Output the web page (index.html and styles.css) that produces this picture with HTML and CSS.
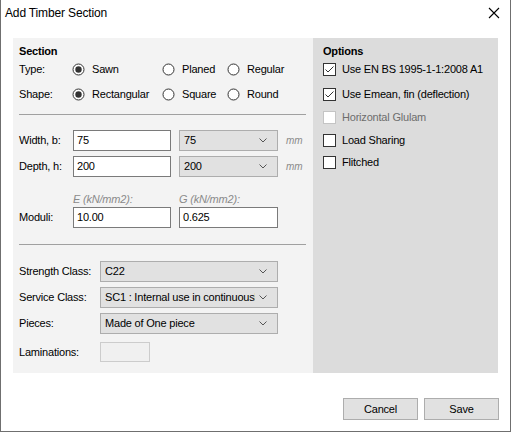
FILE: index.html
```html
<!DOCTYPE html>
<html>
<head>
<meta charset="utf-8">
<link rel="stylesheet" href="styles.css">
</head>
<body>
<div class="window">
  <div class="titlebar">
    <span class="title">Add Timber Section</span>
    <svg class="close" width="12" height="12" viewBox="0 0 12 12"><path d="M1 1 L11 11 M11 1 L1 11" stroke="#000" stroke-width="1.1" fill="none"/></svg>
  </div>
  <div class="content">
    <div class="panel-left">
      <div class="heading">Section</div>
      <div class="row radio-row first">
        <span class="lbl lbl-radio">Type:</span>
        <span class="radio c1"><svg width="13" height="13" viewBox="0 0 13 13"><circle cx="6.5" cy="6.5" r="5.5" fill="#fff" stroke="#333"/><circle cx="6.5" cy="6.5" r="3.2" fill="#333"/></svg>Sawn</span>
        <span class="radio c2"><svg width="13" height="13" viewBox="0 0 13 13"><circle cx="6.5" cy="6.5" r="5.5" fill="#fff" stroke="#333"/></svg>Planed</span>
        <span class="radio"><svg width="13" height="13" viewBox="0 0 13 13"><circle cx="6.5" cy="6.5" r="5.5" fill="#fff" stroke="#333"/></svg>Regular</span>
      </div>
      <div class="row radio-row second">
        <span class="lbl lbl-radio">Shape:</span>
        <span class="radio c1"><svg width="13" height="13" viewBox="0 0 13 13"><circle cx="6.5" cy="6.5" r="5.5" fill="#fff" stroke="#333"/><circle cx="6.5" cy="6.5" r="3.2" fill="#333"/></svg>Rectangular</span>
        <span class="radio c2"><svg width="13" height="13" viewBox="0 0 13 13"><circle cx="6.5" cy="6.5" r="5.5" fill="#fff" stroke="#333"/></svg>Square</span>
        <span class="radio"><svg width="13" height="13" viewBox="0 0 13 13"><circle cx="6.5" cy="6.5" r="5.5" fill="#fff" stroke="#333"/></svg>Round</span>
      </div>
      <div class="sep sep1"></div>
      <div class="row dim-row width-row">
        <span class="lbl lbl-dim">Width, b:</span>
        <span class="input w98">75</span>
        <span class="select w99"><span class="sel-text">75</span><svg class="chev" width="8" height="5" viewBox="0 0 8 5"><path d="M0.5 0.5 L4 4 L7.5 0.5" stroke="#555" fill="none"/></svg></span>
        <span class="unit">mm</span>
      </div>
      <div class="row dim-row depth-row">
        <span class="lbl lbl-dim">Depth, h:</span>
        <span class="input w98">200</span>
        <span class="select w99"><span class="sel-text">200</span><svg class="chev" width="8" height="5" viewBox="0 0 8 5"><path d="M0.5 0.5 L4 4 L7.5 0.5" stroke="#555" fill="none"/></svg></span>
        <span class="unit">mm</span>
      </div>
      <div class="row mod-labels">
        <span class="lbl lbl-dim"></span>
        <span class="hint w98">E (kN/mm2):</span>
        <span class="hint">G (kN/mm2):</span>
      </div>
      <div class="row dim-row moduli-row">
        <span class="lbl lbl-dim">Moduli:</span>
        <span class="input w98">10.00</span>
        <span class="input w99">0.625</span>
      </div>
      <div class="sep sep2"></div>
      <div class="row cls-row strength-row">
        <span class="lbl lbl-cls">Strength Class:</span>
        <span class="select w178"><span class="sel-text">C22</span><svg class="chev" width="8" height="5" viewBox="0 0 8 5"><path d="M0.5 0.5 L4 4 L7.5 0.5" stroke="#555" fill="none"/></svg></span>
      </div>
      <div class="row cls-row service-row">
        <span class="lbl lbl-cls">Service Class:</span>
        <span class="select w178"><span class="sel-text clip">SC1 : Internal use in continuously</span><svg class="chev" width="8" height="5" viewBox="0 0 8 5"><path d="M0.5 0.5 L4 4 L7.5 0.5" stroke="#555" fill="none"/></svg></span>
      </div>
      <div class="row cls-row pieces-row">
        <span class="lbl lbl-cls">Pieces:</span>
        <span class="select w178"><span class="sel-text">Made of One piece</span><svg class="chev" width="8" height="5" viewBox="0 0 8 5"><path d="M0.5 0.5 L4 4 L7.5 0.5" stroke="#555" fill="none"/></svg></span>
      </div>
      <div class="row cls-row lam-row">
        <span class="lbl lbl-cls">Laminations:</span>
        <span class="input disabled"></span>
      </div>
    </div>
    <div class="panel-right">
      <div class="heading">Options</div>
      <div class="check ck1"><svg width="13" height="13" viewBox="0 0 13 13"><rect x="0.5" y="0.5" width="12" height="12" fill="#fff" stroke="#333"/><path d="M2.5 6.5 L5 9 L10.5 3.5" stroke="#333" fill="none"/></svg>Use EN BS 1995-1-1:2008 A1</div>
      <div class="check ck2"><svg width="13" height="13" viewBox="0 0 13 13"><rect x="0.5" y="0.5" width="12" height="12" fill="#fff" stroke="#333"/><path d="M2.5 6.5 L5 9 L10.5 3.5" stroke="#333" fill="none"/></svg>Use Emean, fin (deflection)</div>
      <div class="check ck3 off"><svg width="13" height="13" viewBox="0 0 13 13"><rect x="0.5" y="0.5" width="12" height="12" fill="#fff" stroke="#c4c4c4"/></svg>Horizontal Glulam</div>
      <div class="check ck4"><svg width="13" height="13" viewBox="0 0 13 13"><rect x="0.5" y="0.5" width="12" height="12" fill="#fff" stroke="#333"/></svg>Load Sharing</div>
      <div class="check ck5"><svg width="13" height="13" viewBox="0 0 13 13"><rect x="0.5" y="0.5" width="12" height="12" fill="#fff" stroke="#333"/></svg>Flitched</div>
    </div>
  </div>
  <div class="footer">
    <span class="btn">Cancel</span>
    <span class="btn">Save</span>
  </div>
</div>
</body>
</html>
```
FILE: styles.css
```css
* { box-sizing: border-box; }
html, body { margin: 0; padding: 0; background: #fff; }
body {
  font-family: "Liberation Sans", Arial, sans-serif;
  font-size: 11px;
  letter-spacing: -0.2px;
  color: #000;
}
.window {
  width: 511px;
  height: 432px;
  border-left: 1px solid #6f6f6f;
  border-right: 1px solid #6f6f6f;
  border-bottom: 1px solid #6f6f6f;
  background: #fff;
  display: flex;
  flex-direction: column;
}
.titlebar {
  height: 26px;
  display: flex;
  align-items: center;
  justify-content: space-between;
  padding: 0 10px 0 4px;
}
.title { font-size: 12px; letter-spacing: -0.15px; }
.close { display: block; }
.content {
  display: flex;
  padding: 12px 0 0 12px;
}
.panel-left {
  width: 300px;
  height: 335px;
  background: #f3f3f3;
  padding: 6px 7px 0 6px;
  display: flex;
  flex-direction: column;
}
.panel-right {
  width: 185px;
  height: 335px;
  background: #dcdcdc;
  padding: 6px 0 0 10px;
  display: flex;
  flex-direction: column;
}
.heading {
  font-weight: bold;
  height: 14px;
  line-height: 14px;
}
.row {
  display: flex;
  align-items: center;
  line-height: 13px;
}
.radio-row { height: 20px; }
.radio-row.first { margin-top: 1px; }
.radio-row.second { margin-top: 5px; }
.lbl { flex: none; }
.lbl-radio { width: 53px; }
.lbl-dim { width: 54px; }
.lbl-cls { width: 81px; }
.radio {
  display: flex;
  align-items: center;
  gap: 7px;
}
.radio svg { display: block; flex: none; }
.c1 { width: 90px; }
.c2 { width: 65px; }
.sep {
  height: 1px;
  background: #a0a0a0;
  flex: none;
}
.sep1 { margin-top: 10px; }
.sep2 { margin-top: 16px; }
.dim-row { height: 21px; }
.width-row { margin-top: 15px; }
.depth-row { margin-top: 5px; }
.mod-labels { height: 14px; margin-top: 15px; }
.moduli-row { margin-top: 1px; }
.input {
  height: 21px;
  background: #fff;
  border: 1px solid #7a7a7a;
  padding: 0 3px;
  display: flex;
  align-items: center;
  flex: none;
}
.input.disabled {
  width: 50px;
  height: 20px;
  background: #f0f0f0;
  border-color: #cccccc;
}
.w98 { width: 98px; margin-right: 8px; }
.w99 { width: 99px; }
.w178 { width: 178px; }
.select {
  height: 21px;
  background: #e1e1e1;
  border: 1px solid #adadad;
  display: flex;
  align-items: center;
  padding: 0 10px 0 4px;
  flex: none;
  overflow: hidden;
}
.sel-text {
  flex: 1;
  white-space: nowrap;
  overflow: hidden;
}
.chev { display: block; flex: none; margin-left: 4px; }
.unit {
  margin-left: 8px;
  font-style: italic;
  color: #8a8a8a;
  font-size: 10px;
}
.hint {
  font-style: italic;
  color: #8a8a8a;
}
.cls-row { height: 21px; }
.strength-row { margin-top: 16px; }
.service-row { margin-top: 5px; }
.pieces-row { margin-top: 5px; }
.lam-row { margin-top: 8px; height: 20px; }
.check {
  display: flex;
  align-items: center;
  gap: 6px;
  height: 20px;
  line-height: 13px;
}
.check svg { display: block; flex: none; }
.ck1 { margin-top: 1px; }
.ck2 { margin-top: 5px; }
.ck3 { margin-top: 3px; }
.ck4 { margin-top: 3px; }
.ck5 { margin-top: 2px; }
.check.off { color: #6d6d6d; }
.footer {
  display: flex;
  justify-content: flex-end;
  gap: 6px;
  padding: 25px 11px 0 0;
}
.btn {
  width: 75px;
  height: 22px;
  background: #e1e1e1;
  border: 1px solid #adadad;
  display: flex;
  align-items: center;
  justify-content: center;
}
```
